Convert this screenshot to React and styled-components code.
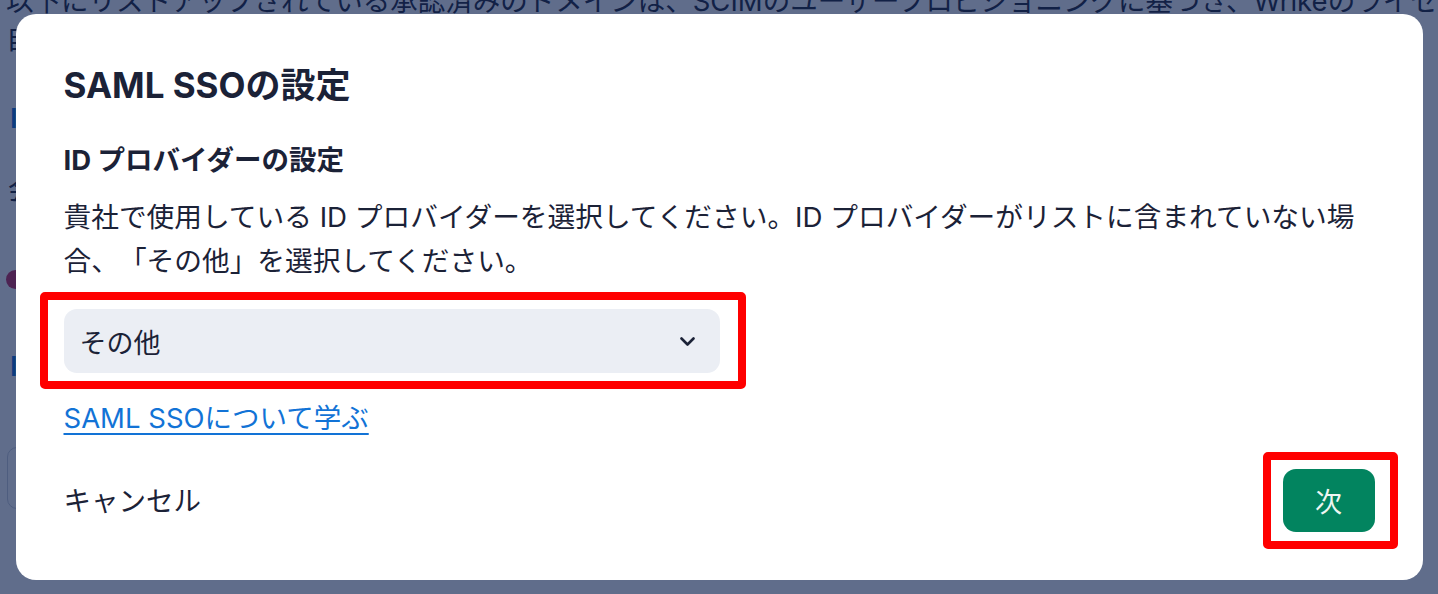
import React from 'react';
import styled, { createGlobalStyle } from 'styled-components';

const GlobalStyle = createGlobalStyle`
  html, body {
    margin: 0;
    padding: 0;
    overflow: hidden;
  }
  body {
    font-family: Inter, "Noto Sans CJK JP", sans-serif;
    color: #1b2237;
    background: #ffffff;
    text-spacing-trim: space-all;
  }
`;

function Chevron() {
  return (
    <svg width="15" height="9" viewBox="0 0 15 9" fill="none">
      <polyline
        points="1.5,1.5 7.5,7.5 13.5,1.5"
        stroke="#1b2237"
        strokeWidth="2.6"
        strokeLinecap="round"
        strokeLinejoin="round"
      />
    </svg>
  );
}

function App() {
  return (
    <>
      <GlobalStyle />
      <Page>
        <Intro>
          以下にリストアップされている承認済みのドメインは、SCIMのユーザープロビジョニングに基づき、Wrikeのライセンスが
          <br />
          自動的に割り当てられます。
        </Intro>
        <SectionTitle $gap={40}>IdPドメイン</SectionTitle>
        <PageText>会社のドメイン</PageText>
        <Status>
          <StatusDot />
          未確認
        </Status>
        <SectionTitle $gap={57}>IdP設定</SectionTitle>
        <FakeInput />
      </Page>

      <Overlay>
        <Dialog role="dialog" aria-labelledby="saml-title">
          <Title id="saml-title">SAML SSOの設定</Title>
          <SubTitle>ID プロバイダーの設定</SubTitle>
          <Description>
            貴社で使用している ID プロバイダーを選択してください。ID プロバイダーがリストに含まれていない場合、「その他」を選択してください。
          </Description>
          <SelectField>
            <Select>
              <span>その他</span>
              <Chevron />
            </Select>
            <Highlight $top={-17} $left={-24} $right={-26} $bottom={-16} />
          </SelectField>
          <LearnLink href="#saml">SAML SSOについて学ぶ</LearnLink>
          <Footer>
            <CancelButton type="button">キャンセル</CancelButton>
            <Marked>
              <NextButton type="button">次</NextButton>
              <Highlight $top={-17} $left={-20} $right={-23} $bottom={-17} />
            </Marked>
          </Footer>
        </Dialog>
      </Overlay>
    </>
  );
}

const Page = styled.div`
  display: flex;
  flex-direction: column;
  padding-left: 6px;
  height: 594px;
  overflow: hidden;
  font-size: 27.5px;
  color: #1b2237;
`;

const Intro = styled.p`
  margin: -18px 0 0;
  line-height: 38px;
  white-space: nowrap;
`;

const SectionTitle = styled.h3`
  margin: ${(p) => p.$gap}px 0 0 4px;
  font-size: 27.5px;
  line-height: 40px;
  font-weight: 600;
  color: #0b6fdc;
`;

const PageText = styled.p`
  margin: 32px 0 0 2px;
  line-height: 40px;
`;

const Status = styled.div`
  display: flex;
  align-items: center;
  gap: 10px;
  margin-top: 59px;
  height: 20px;
`;

const StatusDot = styled.span`
  width: 19px;
  height: 19px;
  border-radius: 50%;
  background: #c8265a;
`;

const FakeInput = styled.div`
  margin: 61px 0 0 1px;
  width: 420px;
  height: 60px;
  border: 1px solid #c9d0dc;
  border-radius: 10px;
`;

const Overlay = styled.div`
  position: fixed;
  inset: 0;
  display: flex;
  align-items: center;
  justify-content: center;
  background: rgba(13, 34, 79, 0.66);
`;

const Dialog = styled.section`
  box-sizing: border-box;
  width: 1407px;
  height: 566px;
  padding: 51px 48px 48px;
  display: flex;
  flex-direction: column;
  background: #ffffff;
  border-radius: 20px;
`;

const Title = styled.h1`
  margin: 0;
  font-size: 35px;
  line-height: 40px;
  font-weight: 700;
  color: #1b2237;
`;

const SubTitle = styled.h2`
  margin: 35px 0 0;
  font-size: 27.5px;
  line-height: 40px;
  font-weight: 700;
  color: #1b2237;
`;

const Description = styled.p`
  margin: 15px 0 0;
  font-size: 27.7px;
  line-height: 44px;
  color: #1b2237;
`;

const Marked = styled.div`
  position: relative;
  align-self: flex-start;
`;

const SelectField = styled(Marked)`
  margin-top: 26px;
`;

const Highlight = styled.span`
  position: absolute;
  top: ${(p) => p.$top}px;
  left: ${(p) => p.$left}px;
  right: ${(p) => p.$right}px;
  bottom: ${(p) => p.$bottom}px;
  border: 8px solid #ff0000;
  border-radius: 5px;
  pointer-events: none;
`;

const Select = styled.div`
  box-sizing: border-box;
  width: 656px;
  height: 64px;
  padding: 0 25px 0 16px;
  display: flex;
  align-items: center;
  justify-content: space-between;
  background: #ebeef4;
  border-radius: 13px;
  font-size: 27px;
  color: #1b2237;
`;

const LearnLink = styled.a`
  align-self: flex-start;
  margin-top: 25px;
  font-size: 27.5px;
  line-height: 40px;
  color: #1273d6;
  text-decoration: underline;
  text-decoration-thickness: 2px;
  text-underline-offset: 5px;
`;

const Footer = styled.div`
  margin-top: 31px;
  display: flex;
  align-items: center;
  justify-content: space-between;
`;

const CancelButton = styled.button`
  padding: 0;
  border: none;
  background: none;
  font-family: inherit;
  font-size: 27.5px;
  line-height: 40px;
  color: #1b2237;
  cursor: pointer;
`;

const NextButton = styled.button`
  display: block;
  width: 92px;
  height: 63px;
  border: none;
  border-radius: 13px;
  background: #02845f;
  font-family: inherit;
  font-size: 27px;
  color: #eef6f2;
  cursor: pointer;
`;

export default App;
